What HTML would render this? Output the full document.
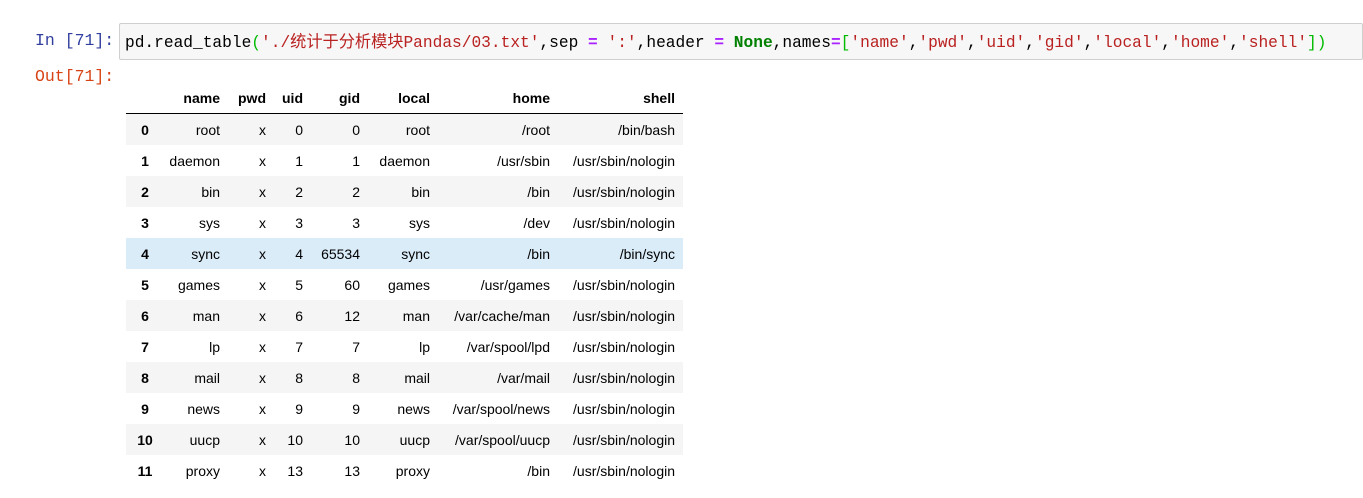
<!DOCTYPE html>
<html><head><meta charset="utf-8"><style>
body{margin:0;width:1363px;height:498px;background:#fff;overflow:hidden;position:relative;font-family:"Liberation Sans",Arial,sans-serif}
.p{position:absolute;font-family:"Liberation Mono","DejaVu Sans Mono",monospace;font-size:16.5px}
.in{left:35px;top:31px;color:#303f9f}
.out{left:35px;top:67px;color:#d84315}
.box{position:absolute;left:119px;top:23px;width:1242px;height:35px;border:1px solid #cfcfcf;border-radius:2px;background:#f7f7f7}
.code{position:absolute;left:125px;top:28px;font-family:"Liberation Mono","Noto Sans CJK SC",monospace;font-size:16.2px;color:#000;white-space:pre}
.s{color:#ba2121}.o{color:#aa22ff;font-weight:bold}.k{color:#008000;font-weight:bold}.b{color:#0b0}
table{position:absolute;left:126px;top:82px;border-collapse:collapse;font-size:14px;table-layout:fixed}
td,th{height:31px;padding:0 8px 0 0;text-align:right;white-space:nowrap}
thead th{height:31px;border-bottom:1px solid #000;font-weight:bold}
tbody th{text-align:center;padding:0;font-weight:bold}
tbody tr:nth-child(odd){background:#f5f5f5}
tr.h{background:#dbecf9!important}
</style></head><body>
<div class="p in">In [71]:</div>
<div class="box"></div>
<div class="code">pd.read_table<span class="b">(</span><span class="s">'./统计于分析模块Pandas/03.txt'</span>,sep <span class="o">=</span> <span class="s">':'</span>,header <span class="o">=</span> <span class="k">None</span>,names<span class="o">=</span><span class="b">[</span><span class="s">'name'</span>,<span class="s">'pwd'</span>,<span class="s">'uid'</span>,<span class="s">'gid'</span>,<span class="s">'local'</span>,<span class="s">'home'</span>,<span class="s">'shell'</span><span class="b">])</span></div>
<div class="p out">Out[71]:</div>
<table>
<colgroup><col style="width:38px"><col style="width:64px"><col style="width:46px"><col style="width:37px"><col style="width:57px"><col style="width:70px"><col style="width:120px"><col style="width:125px"></colgroup>
<thead><tr><th></th><th>name</th><th>pwd</th><th>uid</th><th>gid</th><th>local</th><th>home</th><th>shell</th></tr></thead>
<tbody>
<tr><th>0</th><td>root</td><td>x</td><td>0</td><td>0</td><td>root</td><td>/root</td><td>/bin/bash</td></tr>
<tr><th>1</th><td>daemon</td><td>x</td><td>1</td><td>1</td><td>daemon</td><td>/usr/sbin</td><td>/usr/sbin/nologin</td></tr>
<tr><th>2</th><td>bin</td><td>x</td><td>2</td><td>2</td><td>bin</td><td>/bin</td><td>/usr/sbin/nologin</td></tr>
<tr><th>3</th><td>sys</td><td>x</td><td>3</td><td>3</td><td>sys</td><td>/dev</td><td>/usr/sbin/nologin</td></tr>
<tr class="h"><th>4</th><td>sync</td><td>x</td><td>4</td><td>65534</td><td>sync</td><td>/bin</td><td>/bin/sync</td></tr>
<tr><th>5</th><td>games</td><td>x</td><td>5</td><td>60</td><td>games</td><td>/usr/games</td><td>/usr/sbin/nologin</td></tr>
<tr><th>6</th><td>man</td><td>x</td><td>6</td><td>12</td><td>man</td><td>/var/cache/man</td><td>/usr/sbin/nologin</td></tr>
<tr><th>7</th><td>lp</td><td>x</td><td>7</td><td>7</td><td>lp</td><td>/var/spool/lpd</td><td>/usr/sbin/nologin</td></tr>
<tr><th>8</th><td>mail</td><td>x</td><td>8</td><td>8</td><td>mail</td><td>/var/mail</td><td>/usr/sbin/nologin</td></tr>
<tr><th>9</th><td>news</td><td>x</td><td>9</td><td>9</td><td>news</td><td>/var/spool/news</td><td>/usr/sbin/nologin</td></tr>
<tr><th>10</th><td>uucp</td><td>x</td><td>10</td><td>10</td><td>uucp</td><td>/var/spool/uucp</td><td>/usr/sbin/nologin</td></tr>
<tr><th>11</th><td>proxy</td><td>x</td><td>13</td><td>13</td><td>proxy</td><td>/bin</td><td>/usr/sbin/nologin</td></tr>
</tbody></table>
</body></html>
